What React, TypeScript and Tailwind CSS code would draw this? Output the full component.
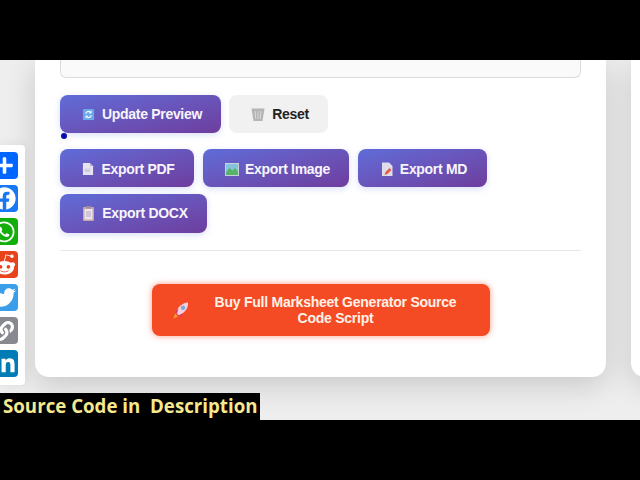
import React from 'react';
import { FaPlus, FaFacebook, FaWhatsapp, FaRedditAlien, FaTwitter, FaLink, FaLinkedinIn } from 'react-icons/fa';

const primaryBtn =
  'flex h-[38px] items-center justify-center rounded-lg bg-gradient-to-br from-[#5f6cd8] to-[#6d3d9e] pl-[3px] text-[14px] font-bold tracking-[-0.3px] text-[#f7f5fc] shadow-[0_2px_6px_rgba(102,126,234,0.25)]';

const RefreshIcon = () => (
  <svg width="13" height="13" viewBox="0 0 14 14" className="mr-[7px]">
    <rect x="1" y="1" width="12" height="12" rx="1" fill="#6aa9e8" />
    <path d="M4 6a3 3 0 0 1 5.4-1M10 8a3 3 0 0 1-5.4 1" fill="none" stroke="#fff" strokeWidth="1.3" />
    <path d="M9.8 3v2.4H7.6M4.2 11V8.6h2.2" fill="none" stroke="#fff" strokeWidth="0.9" />
  </svg>
);

const TrashIcon = () => (
  <svg width="14" height="15" viewBox="0 0 14 14" className="mr-[7px]">
    <path d="M0.500 1h13L11.500 13.500h-9z" fill="#b4b4b4" />
    <path d="M4 3.500l.8 8M7 3.500v8M10 3.500l-.8 8" stroke="#dedede" strokeWidth="0.9" />
  </svg>
);

const PageIcon = () => (
  <svg width="12" height="14" viewBox="0 0 13 14" className="mr-[7px]">
    <path d="M1 0.500h7.500L12 4v9.500H1z" fill="#e6e3f1" />
    <path d="M8.500 0.500V4H12z" fill="#bdb8d4" />
    <rect x="3" y="6.500" width="6" height="4" fill="#cfcbe2" />
  </svg>
);

const ImageIcon = () => (
  <svg width="14" height="13" viewBox="0 0 14 13" className="mr-[6px]">
    <rect width="14" height="13" fill="#c3d3d8" />
    <rect x="1" y="1" width="12" height="7" fill="#86c3dc" />
    <path d="M1 9l3.500-4 3 2.500L10 5l3 3.500V12H1z" fill="#58b368" />
  </svg>
);

const MemoIcon = () => (
  <svg width="13" height="15" viewBox="0 0 13 15" className="mr-[6px]">
    <path d="M1 0.500h7L11.500 4v10H1z" fill="#e0dcec" />
    <path d="M3.500 13l1-3 4-4 2 2-4 4z" fill="#e2603f" />
  </svg>
);

const ClipboardIcon = () => (
  <svg width="13" height="15" viewBox="0 0 13 15" className="mr-[7px]">
    <rect x="1" y="1" width="11" height="14" rx="1" fill="#c9a7a0" />
    <rect x="2.500" y="3" width="8" height="10.500" fill="#e9e4ee" />
    <rect x="4" y="0" width="5" height="2.500" fill="#9d8ca8" />
    <path d="M4 6h5M4 8h5M4 10h5" stroke="#a99bbd" strokeWidth="0.8" />
  </svg>
);

const RocketIcon = () => (
  <svg width="16" height="17" viewBox="0 0 16 17" className="shrink-0">
    <path d="M0.500 16.500l1.500-5 3 3z" fill="#f0a030" />
    <path d="M3 10.500C4.500 5 9 1 15 0.500 15.500 6 12 10.500 6 13.500z" fill="#f5cfe0" />
    <path d="M2 9.500l3.500-3L4 11.500zM7.500 15l2.500-3.500-4.500 2z" fill="#d8326e" />
    <circle cx="10" cy="5.800" r="2.200" fill="#7fa8d8" />
  </svg>
);

const socials = [
  { icon: <FaPlus size={19} />, bg: 'bg-[#0166ff]' },
  { icon: <FaFacebook size={23} />, bg: 'bg-[#1877f2]' },
  { icon: <FaWhatsapp size={24} />, bg: 'bg-[#12af0a]' },
  { icon: <FaRedditAlien size={23} />, bg: 'bg-[#e8431a]' },
  { icon: <FaTwitter size={23} />, bg: 'bg-[#3a9eea]' },
  { icon: <FaLink size={20} />, bg: 'bg-[#888990]' },
  { icon: <FaLinkedinIn size={23} />, bg: 'bg-[#007bb5]' },
];

export default function App() {
  return (
    <div className="flex h-[480px] w-[640px] flex-col overflow-hidden bg-black font-['Liberation_Sans',Arial,sans-serif]">
      <div className="h-[60px] shrink-0 bg-black" />

      <div className="relative flex h-[360px] shrink-0 gap-[25px] overflow-hidden bg-[#eeeeee] pl-[35px]">
        <div className="flex h-[317px] w-[571px] shrink-0 flex-col rounded-b-[14px] bg-white px-[25px] shadow-[0_8px_30px_rgba(0,0,0,0.16)]">
          <div className="h-[18px] shrink-0 rounded-b-md border border-t-0 border-[#dcdcdc] bg-[#fafafa]" />

          <div className="mt-[17px] flex gap-2">
            <button className={`${primaryBtn} w-[161px]`}>
              <RefreshIcon />
              Update Preview
            </button>
            <button className="flex h-[38px] w-[99px] items-center justify-center rounded-lg bg-[#f1f1f1] pl-[3px] text-[14px] font-bold tracking-[-0.3px] text-[#222222]">
              <TrashIcon />
              Reset
            </button>
          </div>

          <div className="mt-4 flex gap-[9px]">
            <button className={`${primaryBtn} w-[134px] pt-[2px]`}>
              <PageIcon />
              Export PDF
            </button>
            <button className={`${primaryBtn} w-[146px] pt-[2px]`}>
              <ImageIcon />
              Export Image
            </button>
            <button className={`${primaryBtn} w-[129px] pt-[2px]`}>
              <MemoIcon />
              Export MD
            </button>
          </div>

          <button className={`${primaryBtn} mt-[7px] h-[39px] w-[147px]`}>
            <ClipboardIcon />
            Export DOCX
          </button>

          <hr className="mt-[17px] border-t border-[#e8e8e8]" />

          <button className="mx-auto mt-[33px] flex h-[52px] w-[338px] items-center rounded-lg bg-[#f44b25] pl-[21px] text-[14px] font-bold leading-[16px] tracking-[-0.25px] text-[#fff1e6] shadow-[0_0_6px_rgba(244,75,37,0.55)]">
            <RocketIcon />
            <span className="ml-[22px] w-[250px] text-center">Buy Full Marksheet Generator Source Code Script</span>
          </button>
        </div>

        <div className="h-[317px] w-[100px] shrink-0 rounded-bl-[14px] bg-white shadow-[0_8px_30px_rgba(0,0,0,0.16)]" />

        {/* cursor dot */}
        <div className="absolute left-[61px] top-[73px] h-[6px] w-[6px] rounded-full bg-[#0a0ab0]" />

        {/* floating share bar */}
        <div className="absolute left-0 top-[85px] flex h-[240px] w-[25px] flex-col gap-[6px] overflow-hidden rounded-r bg-white py-[7px] shadow-[0_0_12px_rgba(0,0,0,0.08)]">
          {socials.map((s, i) => (
            <div
              key={i}
              className={`-ml-[10px] flex h-[27px] w-[28px] shrink-0 items-center justify-center rounded-[4px] text-white ${s.bg}`}
            >
              {s.icon}
            </div>
          ))}
        </div>

        {/* video caption */}
        <div className="absolute bottom-0 left-0 flex h-[27px] w-[260px] items-center bg-black pl-[3px] font-['Open_Sans',sans-serif] text-[18.7px] font-bold whitespace-pre text-[#f6e88e]">
          Source Code in  Description
        </div>
      </div>

      <div className="h-[60px] shrink-0 bg-black" />
    </div>
  );
}
